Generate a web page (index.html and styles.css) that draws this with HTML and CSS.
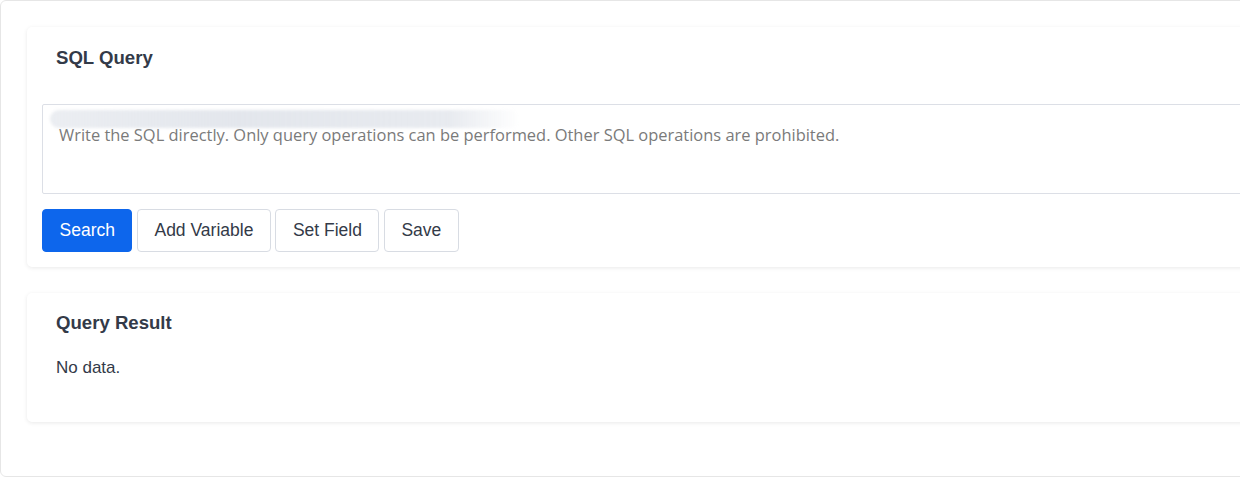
FILE: index.html
```html
<!DOCTYPE html>
<html lang="en">
<head>
<meta charset="utf-8">
<title>SQL Query</title>
<link rel="stylesheet" href="styles.css">
</head>
<body>
<div class="page">
  <section class="card">
    <h2 class="card-title">SQL Query</h2>
    <div class="editor">
      <textarea class="sql-input" placeholder="Write the SQL directly. Only query operations can be performed. Other SQL operations are prohibited."></textarea>
      <span class="smear"></span>
    </div>
    <div class="actions">
      <button class="btn btn-primary">Search</button>
      <button class="btn">Add Variable</button>
      <button class="btn">Set Field</button>
      <button class="btn">Save</button>
    </div>
  </section>
  <section class="card result">
    <h2 class="card-title">Query Result</h2>
    <p class="empty">No data.</p>
  </section>
</div>
</body>
</html>
```
FILE: styles.css
```css
html, body {
  margin: 0;
  padding: 0;
  background: #ffffff;
  overflow: hidden;
}
body {
  font-family: "Liberation Sans", Arial, sans-serif;
  color: #333a48;
}
.page {
  width: 1320px;
  height: 425px;
  border: 1px solid #e6e6e6;
  border-radius: 6px;
  padding: 26px 26px 24px 26px;
  display: flex;
  flex-direction: column;
  gap: 26px;
}
.card {
  background: #fff;
  border-radius: 5px;
  box-shadow: 0 1px 4px rgba(0, 0, 0, 0.09);
  padding: 15px;
}
.card-title {
  margin: 0 0 35px 0;
  padding: 5px 14px 0;
  font-size: 18.6px;
  line-height: 22px;
  font-weight: bold;
  color: #333a48;
}
.editor {
  position: relative;
}
.sql-input {
  display: block;
  box-sizing: border-box;
  width: 100%;
  height: 90px;
  border: 1px solid #dcdfe6;
  border-radius: 2px;
  padding: 18px 16px;
  font-family: "Open Sans", "Noto Sans", sans-serif;
  font-size: 16.45px;
  line-height: 24px;
  resize: none;
  outline: none;
  color: #333a48;
}
.sql-input::placeholder {
  color: #7a7a7a;
}
.smear {
  position: absolute;
  left: 8px;
  top: 6px;
  width: 470px;
  height: 18px;
  border-radius: 9px;
  background: linear-gradient(90deg, rgba(222,226,233,0.6), rgba(222,226,233,0.85) 40%, rgba(222,226,233,0.7) 85%, rgba(222,226,233,0));
  filter: blur(1.5px);
  pointer-events: none;
}
.actions {
  display: flex;
  gap: 4.5px;
  margin-top: 15px;
}
.btn {
  height: 43px;
  padding: 0 16.5px;
  font-family: "Liberation Sans", Arial, sans-serif;
  font-size: 17.5px;
  color: #333a48;
  background: #fff;
  border: 1px solid #d8dce3;
  border-radius: 4px;
  cursor: pointer;
}
.btn-primary {
  background: #0d66ec;
  border-color: #0d66ec;
  color: #fff;
}
.result .card-title {
  padding-top: 4px;
  margin-bottom: 23px;
}
.empty {
  margin: 0;
  padding: 0 14px 28px;
  font-size: 17px;
  line-height: 22px;
}
```
